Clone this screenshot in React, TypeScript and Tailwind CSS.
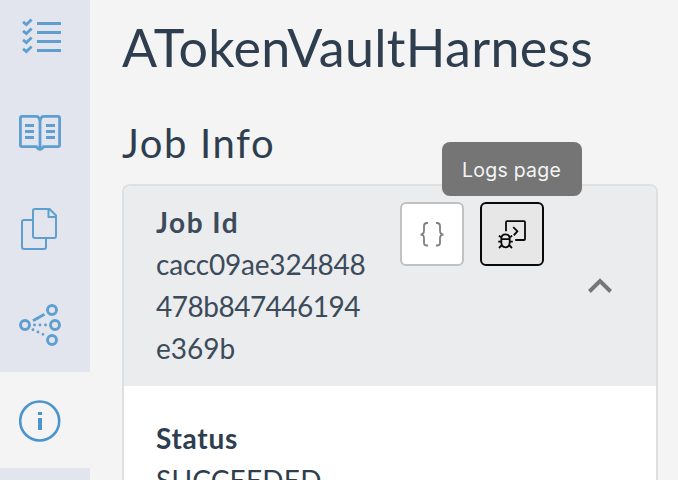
import type { ReactNode } from "react";

function ChecklistIcon() {
  return (
    <svg width="42" height="42" viewBox="0 0 42 42" fill="none" stroke="#5f9fd0" strokeWidth="2.8">
      {[0, 9, 18, 27].map((y) => (
        <g key={y}>
          <path d={`M4 ${5.8 + y}L7.4 ${8.6 + y}L12.6 ${3.6 + y}`} />
          <path d={`M18 ${7.5 + y}H42`} strokeWidth="3" />
        </g>
      ))}
    </svg>
  );
}

function BookIcon() {
  return (
    <svg width="42" height="42" viewBox="0 0 42 42" fill="none" stroke="#5f9fd0" strokeWidth="2.8">
      <path d="M21 9Q20 4.4 17.5 4.4H3Q1.4 4.4 1.4 6V33Q1.4 34.6 3 34.6H17.5Q19 37.4 21 37.4Q23 37.4 24.5 34.6H39Q40.6 34.6 40.6 33V6Q40.6 4.4 39 4.4H24.5Q22 4.4 21 9V37.4" />
      <path d="M6 13.5H15M6 19.5H15M6 25.5H15M27 13.5H36M27 19.5H36M27 25.5H36" strokeWidth="3" />
    </svg>
  );
}

function CopyIcon() {
  return (
    <svg width="42" height="42" viewBox="0 0 42 42" fill="none" stroke="#5f9fd0" strokeWidth="2" strokeLinejoin="round">
      <path d="M13 12H5Q3 12 3 14V39Q3 41 5 41H25Q27 41 27 39V31" />
      <path d="M30.5 1H16Q14 1 14 3V28Q14 30 16 30H35Q37 30 37 28V7.5ZM29.5 1.5V9H36.5" />
    </svg>
  );
}

function GraphIcon() {
  return (
    <svg width="42" height="42" viewBox="0 0 42 42" fill="none" stroke="#5f9fd0" strokeWidth="2.9">
      <circle cx="6" cy="21" r="4.5" />
      <circle cx="33" cy="6" r="4.5" />
      <circle cx="36" cy="21" r="4.5" />
      <circle cx="33" cy="36" r="4.5" />
      <path d="M14 16.7L25.5 10.3" />
      <path d="M15.5 21H28M14 25.7L26 31.3" strokeLinecap="round" strokeDasharray="0 5.5" />
    </svg>
  );
}

function InfoIcon() {
  return (
    <svg width="42" height="42" viewBox="0 0 42 42" fill="none" stroke="#4b94cc">
      <circle cx="20.7" cy="21" r="19.5" strokeWidth="2.6" />
      <path d="M21 12V15M21 18V30" strokeWidth="4" />
    </svg>
  );
}

function DebugConsoleIcon() {
  return (
    <svg width="30" height="30" viewBox="0 0 30 30" fill="none" stroke="#08090b" strokeWidth="1.8">
      <path d="M9 12.3V3.3Q9 2.2 10 2.2H27Q28 2.2 28 3.2V20Q28 21 27 21H18.2M16.2 8.2L20.4 12.2L16.8 16.4" />
      <path d="M4.3 20.2V23Q4.3 28.3 8.5 28.3Q12.7 28.3 12.7 23V20.2ZM4.3 19.5Q4.5 15.3 8.5 15.3Q12.5 15.3 12.7 19.5M5 18.7L1.8 16.7M12 18.7L15.2 16.7M1.2 22.7H4.3M12.7 22.7H15.8M4.8 26.2L2 29M12.2 26.2L15 29" />
    </svg>
  );
}

function NavItem({ children, active = false }: { children: ReactNode; active?: boolean }) {
  return (
    <div className={`flex h-24 shrink-0 items-center pl-[19px] pt-[2px] ${active ? "bg-[#f4f4f4]" : "bg-[#e2e5ee]"}`}>
      {children}
    </div>
  );
}

export default function App() {
  return (
    <div className="flex h-[480px] w-[678px] overflow-hidden bg-[#f4f4f4] font-['Lato',sans-serif] text-[#2e3e4e]">
      <nav className="flex w-[90px] shrink-0 flex-col bg-[#e2e5ee]">
        <div className="-mt-3 flex flex-col">
          <NavItem><ChecklistIcon /></NavItem>
          <NavItem><BookIcon /></NavItem>
          <NavItem><CopyIcon /></NavItem>
          <NavItem><GraphIcon /></NavItem>
          <NavItem active><InfoIcon /></NavItem>
        </div>
      </nav>
      <main className="w-[568px] shrink-0 pl-8">
        <h1 className="mt-[17px] h-[60px] whitespace-nowrap text-[52px] leading-[60px] tracking-[0.3px]">ATokenVaultHarness</h1>
        <h2 className="mt-[41px] h-[50px] whitespace-nowrap text-[40px] leading-[50px] tracking-[1.6px]">Job Info</h2>
        <section className="mt-4 h-[400px] rounded-t-lg border-2 border-[#dedfe0] bg-white text-[28px] leading-[42px]">
          <div className="flex h-[200px] rounded-t-md bg-[#ebecee] pl-8 pt-[15px] text-[#3c4b5a]">
            <div className="w-[244px] shrink-0">
              <div className="font-bold"><span className="tracking-[1.5px]">Job Id</span></div>
              <div><span className="tracking-[-0.2px]">cacc09ae324848</span></div>
              <div><span className="tracking-[-0.5px]">478b847446194</span></div>
              <div><span className="tracking-[0px]">e369b</span></div>
            </div>
            <div className="mt-[1px] flex shrink-0 gap-4">
              <button className="flex size-16 items-center justify-center rounded-md border-2 border-[#c1c1c1] bg-white">
                <svg width="26" height="26" viewBox="0 0 26 26" fill="none" stroke="#808080" strokeWidth="1.8">
                  <path d="M9 2H8Q5 2 5 5V9.5Q5 13.5 1.5 13.5Q5 13.5 5 17.5V22Q5 24.5 8 24.5H9M17 2H18Q21 2 21 5V9.5Q21 13.5 24.5 13.5Q21 13.5 21 17.5V22Q21 24.5 18 24.5H17" />
                </svg>
              </button>
              <div className="relative">
                <button className="flex size-16 items-center justify-center rounded-md border-2 border-[#08090b] bg-[#e7e7e7]">
                  <DebugConsoleIcon />
                </button>
                <div className="absolute -left-[38px] -top-[60px] flex h-[54px] w-[140px] items-center rounded-lg bg-[#757575] pl-5 pt-[2px] font-['Inter',sans-serif] text-[19.5px] leading-6 text-[#f4f4f4]">
                  <span className="whitespace-nowrap tracking-[0.25px]">Logs page</span>
                </div>
              </div>
            </div>
            <svg className="ml-11 mt-[77px] shrink-0" width="24" height="16" viewBox="0 0 24 16" fill="none" stroke="#777" strokeWidth="4">
              <path d="M1.4 13.5L12 3L22.6 13.5" />
            </svg>
          </div>
          <div className="pl-8 pt-[31px]">
            <div className="font-bold"><span className="tracking-[0.7px]">Status</span></div>
            <div><span className="tracking-[0.2px]">SUCCEEDED</span></div>
          </div>
        </section>
      </main>
    </div>
  );
}
